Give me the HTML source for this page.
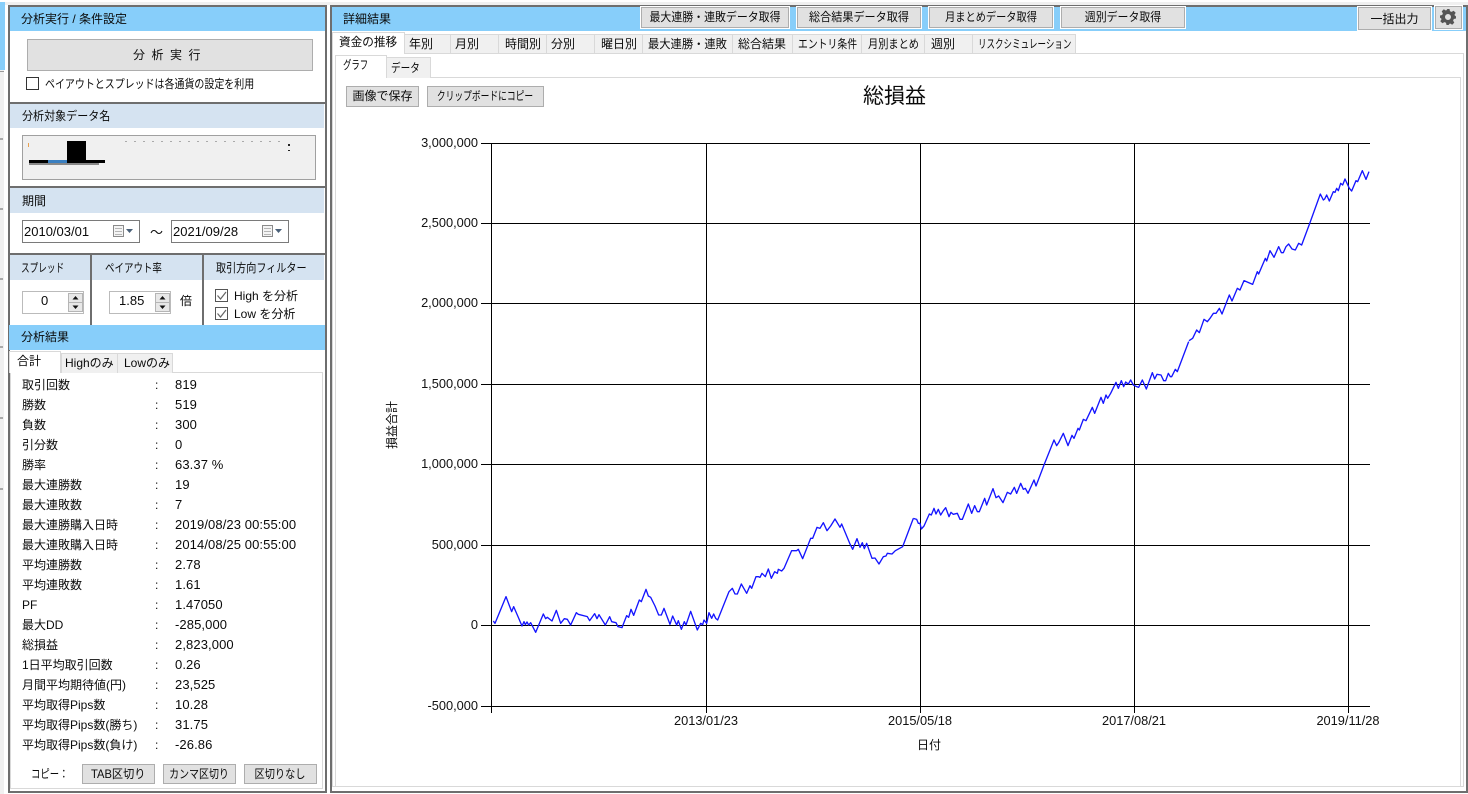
<!DOCTYPE html>
<html lang="ja"><head><meta charset="utf-8"><title>分析</title>
<style>
html,body{margin:0;padding:0;background:#fff}
body{width:1468px;height:794px;position:relative;overflow:hidden;font:12px/16px "Liberation Sans","Noto Sans CJK JP",sans-serif;color:#0a0a0a}
div,span.a{position:absolute;box-sizing:border-box;white-space:nowrap}
.blue{background:#87cefa}.sec{background:#d5e3f1}
.line{background:#6e6e6e}
.btn{background:#e1e1e1;border:1px solid #adadad;text-align:center;line-height:19px}
.s{display:inline-block;margin:0 -30px;transform-origin:50% 50%}
.l{display:inline-block;transform-origin:0 50%}
.ring{outline:1px solid #fff}
.t{line-height:16px;transform-origin:0 50%}
.tab{background:#f0f0f0;border:1px solid #d9d9d9;border-bottom:0;top:34px;height:19px;line-height:19px;padding-left:4px}
.tb{background:#f0f0f0;border:1px solid #d9d9d9;border-bottom:0}
.k{left:22px}.c{left:155px}.v{left:175px;font-size:13px;letter-spacing:.1px}
.cb{width:13px;height:13px;border:1px solid #555;background:#fff}
.spin{border:1px solid #bbb;background:#fff;height:23px;width:62px}
.date{border:1px solid #7a7a7a;background:#fff;height:23px;width:118px;top:220px;font-size:13px;line-height:21px;padding-left:1px}
.ax{font-size:12.8px;line-height:16px;color:#111}
svg{position:absolute;left:0;top:0}
</style></head><body>

<!-- window edge at far left -->
<div style="left:0;top:2px;width:1468px;height:3px;background:#f0f0f0"></div>
<div style="left:0;top:2px;width:5px;height:68px;background:#87cefa"></div>
<div style="left:0;top:70px;width:4px;height:724px;background:#f0f0f0"></div>
<div style="left:0;top:71px;width:4px;height:1px;background:#999"></div>
<div style="left:0;top:138px;width:3px;height:2px;background:#aaa"></div>
<div style="left:0;top:208px;width:3px;height:2px;background:#aaa"></div>
<div style="left:0;top:278px;width:3px;height:2px;background:#aaa"></div>
<div style="left:0;top:346px;width:3px;height:2px;background:#aaa"></div>
<div style="left:0;top:417px;width:3px;height:2px;background:#aaa"></div>
<div style="left:0;top:488px;width:3px;height:2px;background:#aaa"></div>

<!-- LEFT PANEL -->
<div style="left:8px;top:5px;width:319px;height:788px;border:2px solid #6e6e6e;background:#fff"></div>
<div class="blue" style="left:10px;top:7px;width:315px;height:24px"></div>
<div class="t" style="left:21px;top:11px">分析実行 / 条件設定</div>
<div class="btn" style="left:27px;top:39px;width:286px;height:32px;line-height:30px;letter-spacing:6.5px">分析実行</div>
<div class="cb" style="left:26px;top:77px;border-color:#333"></div>
<div class="t" style="left:45px;top:76px;transform:scaleX(.83)">ペイアウトとスプレッドは各通貨の設定を利用</div>

<div class="line" style="left:9px;top:102px;width:316px;height:2px"></div>
<div class="sec" style="left:10px;top:104px;width:314px;height:24px"></div>
<div class="t" style="left:22px;top:108px;transform:scaleX(.92)">分析対象データ名</div>
<div style="left:22px;top:135px;width:294px;height:45px;border:1px solid #a0a0a0;background:#f0f0f0"></div>
<div style="left:67px;top:141px;width:19px;height:20px;background:#000"></div>
<div style="left:29px;top:160px;width:76px;height:3px;background:#000"></div>
<div style="left:48px;top:160px;width:19px;height:3px;background:#3a7fc0"></div>
<div style="left:29px;top:163px;width:70px;height:2px;background:#888"></div>
<div style="left:288px;top:144px;width:2px;height:2px;background:#222"></div>
<div style="left:288px;top:150px;width:2px;height:1px;background:#222"></div>
<div style="left:125px;top:141px;width:160px;height:1px;background:repeating-linear-gradient(90deg,#aaa 0 2px,transparent 2px 9px)"></div>
<div style="left:28px;top:143px;width:1px;height:4px;background:#e8a050"></div>

<div class="line" style="left:9px;top:186px;width:316px;height:2px"></div>
<div class="sec" style="left:10px;top:188px;width:314px;height:25px"></div>
<div class="t" style="left:22px;top:193px">期間</div>
<div class="date" style="left:22px">2010/03/01</div>
<div class="date" style="left:171px">2021/09/28</div>
<div style="left:150px;top:224px;font-size:13px;line-height:18px">～</div>

<div class="line" style="left:9px;top:253px;width:316px;height:2px"></div>
<div class="sec" style="left:10px;top:255px;width:314px;height:25px"></div>
<div class="line" style="left:90px;top:255px;width:2px;height:70px"></div>
<div class="line" style="left:202px;top:255px;width:2px;height:70px"></div>
<div class="t" style="left:21px;top:260px;transform:scaleX(.72)">スプレッド</div>
<div class="t" style="left:105px;top:260px;transform:scaleX(.79)">ペイアウト率</div>
<div class="t" style="left:216px;top:260px;transform:scaleX(.84)">取引方向フィルター</div>

<div class="spin" style="left:22px;top:291px"></div>
<div class="t" style="left:41px;top:293px;font-size:13px">0</div>
<div class="spin" style="left:109px;top:291px"></div>
<div class="t" style="left:119px;top:293px;font-size:13px">1.85</div>
<div class="t" style="left:180px;top:293px">倍</div>
<div class="cb" style="left:215px;top:289px"></div>
<div class="cb" style="left:215px;top:307px"></div>
<div class="t" style="left:234px;top:288px">High を分析</div>
<div class="t" style="left:234px;top:306px">Low を分析</div>

<div class="blue" style="left:9px;top:325px;width:316px;height:25px"></div>
<div class="t" style="left:21px;top:329px">分析結果</div>
<div style="left:10px;top:372px;width:313px;height:417px;border:1px solid #d9d9d9;background:#fff"></div>
<div class="tb" style="left:61px;top:353px;width:57px;height:20px"></div>
<div class="tb" style="left:117px;top:353px;width:56px;height:20px"></div>
<div style="left:9px;top:351px;width:52px;height:22px;background:#fff;border:1px solid #d9d9d9;border-bottom:0"></div>
<div class="t" style="left:17px;top:353px">合計</div>
<div class="t" style="left:65px;top:355px">Highのみ</div>
<div class="t" style="left:124px;top:355px">Lowのみ</div>

<div class="t k" style="top:377px">取引回数</div><div class="t c" style="top:377px">:</div><div class="t v" style="top:377px">819</div>
<div class="t k" style="top:397px">勝数</div><div class="t c" style="top:397px">:</div><div class="t v" style="top:397px">519</div>
<div class="t k" style="top:417px">負数</div><div class="t c" style="top:417px">:</div><div class="t v" style="top:417px">300</div>
<div class="t k" style="top:437px">引分数</div><div class="t c" style="top:437px">:</div><div class="t v" style="top:437px">0</div>
<div class="t k" style="top:457px">勝率</div><div class="t c" style="top:457px">:</div><div class="t v" style="top:457px">63.37 %</div>
<div class="t k" style="top:477px">最大連勝数</div><div class="t c" style="top:477px">:</div><div class="t v" style="top:477px">19</div>
<div class="t k" style="top:497px">最大連敗数</div><div class="t c" style="top:497px">:</div><div class="t v" style="top:497px">7</div>
<div class="t k" style="top:517px">最大連勝購入日時</div><div class="t c" style="top:517px">:</div><div class="t v" style="top:517px">2019/08/23 00:55:00</div>
<div class="t k" style="top:537px">最大連敗購入日時</div><div class="t c" style="top:537px">:</div><div class="t v" style="top:537px">2014/08/25 00:55:00</div>
<div class="t k" style="top:557px">平均連勝数</div><div class="t c" style="top:557px">:</div><div class="t v" style="top:557px">2.78</div>
<div class="t k" style="top:577px">平均連敗数</div><div class="t c" style="top:577px">:</div><div class="t v" style="top:577px">1.61</div>
<div class="t k" style="top:597px">PF</div><div class="t c" style="top:597px">:</div><div class="t v" style="top:597px">1.47050</div>
<div class="t k" style="top:617px">最大DD</div><div class="t c" style="top:617px">:</div><div class="t v" style="top:617px">-285,000</div>
<div class="t k" style="top:637px">総損益</div><div class="t c" style="top:637px">:</div><div class="t v" style="top:637px">2,823,000</div>
<div class="t k" style="top:657px">1日平均取引回数</div><div class="t c" style="top:657px">:</div><div class="t v" style="top:657px">0.26</div>
<div class="t k" style="top:677px">月間平均期待値(円)</div><div class="t c" style="top:677px">:</div><div class="t v" style="top:677px">23,525</div>
<div class="t k" style="top:697px">平均取得Pips数</div><div class="t c" style="top:697px">:</div><div class="t v" style="top:697px">10.28</div>
<div class="t k" style="top:717px">平均取得Pips数(勝ち)</div><div class="t c" style="top:717px">:</div><div class="t v" style="top:717px">31.75</div>
<div class="t k" style="top:737px">平均取得Pips数(負け)</div><div class="t c" style="top:737px">:</div><div class="t v" style="top:737px">-26.86</div>

<div class="t" style="left:31px;top:766px;transform:scaleX(.78)">コピー：</div>
<div class="btn" style="left:82px;top:764px;width:73px;height:20px"><span class="s" style="transform:scaleX(.93)">TAB区切り</span></div>
<div class="btn" style="left:163px;top:764px;width:73px;height:20px"><span class="s" style="transform:scaleX(.83)">カンマ区切り</span></div>
<div class="btn" style="left:244px;top:764px;width:73px;height:20px"><span class="s" style="transform:scaleX(.85)">区切りなし</span></div>

<!-- RIGHT PANEL -->
<div style="left:330px;top:5px;width:1138px;height:788px;border:2px solid #6e6e6e;background:#fff"></div>
<div class="blue" style="left:332px;top:7px;width:1134px;height:24px"></div>
<div class="t" style="left:343px;top:11px">詳細結果</div>
<div class="btn ring" style="left:641px;top:7px;width:148px;height:21px"><span class="s" style="transform:scaleX(.91)">最大連勝・連敗データ取得</span></div>
<div class="btn ring" style="left:797px;top:7px;width:124px;height:21px"><span class="s" style="transform:scaleX(.925)">総合結果データ取得</span></div>
<div class="btn ring" style="left:929px;top:7px;width:124px;height:21px"><span class="s" style="transform:scaleX(.85)">月まとめデータ取得</span></div>
<div class="btn ring" style="left:1061px;top:7px;width:124px;height:21px"><span class="s" style="transform:scaleX(.91)">週別データ取得</span></div>
<div class="btn ring" style="left:1358px;top:7px;width:73px;height:23px;line-height:22px">一括出力</div>
<div class="btn ring" style="left:1435px;top:6px;width:27px;height:23px"></div>
<svg width="1468" height="794" viewBox="0 0 1468 794" style="z-index:2">
<g transform="translate(1448 17)" fill="#555"><path fill-rule="evenodd" d="M-1.5-8h3l.5 2.2 1.6.7 2-1.2 2.1 2.1-1.2 2 .7 1.6L8-1.5v3l-2.2.5-.7 1.6 1.2 2-2.1 2.1-2-1.2-1.6.7L1.5 8h-3l-.5-2.2-1.6-.7-2 1.2-2.1-2.1 1.2-2-.7-1.6L-8 1.5v-3l2.2-.5.7-1.6-1.2-2 2.1-2.1 2 1.2 1.6-.7zM0-3a3 3 0 1 0 0 6 3 3 0 0 0 0-6z"/></g>
</svg>

<div style="left:332px;top:53px;width:1132px;height:734px;border:1px solid #d9d9d9;background:#fff"></div>
<div style="left:335px;top:77px;width:1126px;height:710px;border:1px solid #d9d9d9;background:#fff"></div>
<div class="tab" style="left:404px;width:47px">年別</div>
<div class="tab" style="left:450px;width:49px">月別</div>
<div class="tab" style="left:498px;width:49px;padding-left:6px">時間別</div>
<div class="tab" style="left:546px;width:49px">分別</div>
<div class="tab" style="left:594px;width:49px;padding-left:6px">曜日別</div>
<div class="tab" style="left:642px;width:91px;padding-left:5px"><span class="l" style="transform:scaleX(.94)">最大連勝・連敗</span></div>
<div class="tab" style="left:732px;width:61px;padding-left:5px"><span class="l">総合結果</span></div>
<div class="tab" style="left:792px;width:70px;padding-left:5px"><span class="l" style="transform:scaleX(.82)">エントリ条件</span></div>
<div class="tab" style="left:861px;width:64px;padding-left:6px"><span class="l" style="transform:scaleX(.85)">月別まとめ</span></div>
<div class="tab" style="left:924px;width:49px;padding-left:6px">週別</div>
<div class="tab" style="left:972px;width:104px;padding-left:5px"><span class="l" style="transform:scaleX(.71)">リスクシミュレーション</span></div>
<div style="left:332px;top:32px;width:73px;height:22px;background:#fff;border:1px solid #d9d9d9;border-bottom:0;line-height:19px;padding-left:6px"><span class="l" style="transform:scaleX(.97)">資金の推移</span></div>
<div class="tb" style="left:386px;top:57px;width:45px;height:21px;line-height:20px;padding-left:4px"><span class="l" style="transform:scaleX(.8)">データ</span></div>
<div style="left:335px;top:55px;width:52px;height:23px;background:#fff;border:1px solid #d9d9d9;border-bottom:0;line-height:19px;padding-left:7px"><span class="l" style="transform:scaleX(.7)">グラフ</span></div>

<div class="btn" style="left:346px;top:86px;width:73px;height:21px">画像で保存</div>
<div class="btn" style="left:427px;top:86px;width:117px;height:21px"><span class="s" style="transform:scaleX(.73)">クリップボードにコピー</span></div>
<div style="left:863px;top:84px;font-size:21px;line-height:26px">総損益</div>

<!-- chart -->
<svg width="1468" height="794" viewBox="0 0 1468 794" style="z-index:1">
<g stroke="#000" stroke-width="1" shape-rendering="crispEdges" fill="none">
<path d="M481 143.5H1370M481 223.5H1370M481 303.5H1370M481 384.5H1370M481 464.5H1370M481 545.5H1370M481 625.5H1370M481 706.5H1370"/>
<path d="M491.5 143V713M706.5 143V713M920.5 143V713M1134.5 143V713M1348.5 143V713"/>
</g>
<g fill="none" stroke="#1414ff" stroke-linejoin="round">
<polyline transform="translate(480 520) scale(.33333)" stroke-width="4" points="40,303 45,310 78,230 95,275 101,260 115,292 126,318 132,305 136,314 141,306 146,315 152,308 167,337 190,282 197,296 202,292 216,303 229,271 242,310 253,296 262,298 272,315 289,278 295,283 322,290 329,302 344,281 351,296 357,284 376,315 389,290 395,305 408,308 414,320 426,323 440,287 446,292 453,268 461,286 478,240 484,245 498,208 505,228 512,232 525,258 536,285 544,285 552,265 570,313 578,288 590,315 595,302 604,328 613,305 618,315 632,274 652,330 662,310 668,314 672,300 680,310 687,278 695,295 701,282 707,295 713,300 747,215 757,205 765,222 772,222 784,192 792,206 800,220 810,197 815,205 828,170 835,170 840,172 846,160 856,170 865,147 874,175 884,155 892,160 895,148 905,153 912,145 935,92 950,92 955,88 968,116 992,55 998,55 1011,22 1020,25 1030,8 1041,32 1052,18 1065,-3 1080,22 1085,12 1110,72 1118,88 1131,56 1140,82 1147,68 1153,86 1160,70 1176,115 1185,114 1197,132 1210,110 1218,108 1222,100 1236,102 1246,92 1268,80 1300,-5"/>
<polyline transform="translate(900 330) scale(.33333)" stroke-width="4" points="40,565 50,568 55,580 60,580 64,597 72,588 88,552 94,555 102,535 108,552 115,538 122,555 130,542 137,533 147,560 153,547 160,553 172,550 180,568 187,568 205,522 215,550 224,527 232,545 238,545 254,505 260,525 279,476 288,503 296,498 309,518 322,487 332,492 343,472 350,490 362,460 370,478 376,475 384,490 402,450 408,468 432,405 462,330 470,347 476,338 490,310 504,347 516,316 522,325 534,295 538,300 550,268 558,272 577,232 584,250 603,202 610,220 618,195 623,205 632,190 648,157 655,175 664,152 671,170 677,156 685,162 692,150 700,165 710,170 716,172 727,150 739,177 757,128 764,147 771,133 783,135 791,152 797,152 805,130 811,140 815,140 826,118 832,125 866,35"/>
<polyline transform="translate(1120 150) scale(.33333)" stroke-width="4" points="207,572 218,565 230,540 238,548 252,508 262,515 270,505 280,490 288,490 298,475 306,492 328,435 336,453 352,415 360,420 372,392 398,403 412,365 416,372 436,325 440,333 450,302 462,322 476,290 484,308 490,308 498,290 506,282 516,297 526,300 536,280 545,285 570,218 601,132 610,150 614,147 620,135 628,153 640,125 645,127 650,115 655,122 662,100 668,105 675,87 688,115 695,123 708,92 713,95 727,62 738,88 747,65"/>
</g>
</svg>
<div class="ax" style="left:378px;top:135px;width:100px;text-align:right;z-index:3">3,000,000</div>
<div class="ax" style="left:378px;top:215px;width:100px;text-align:right;z-index:3">2,500,000</div>
<div class="ax" style="left:378px;top:295px;width:100px;text-align:right;z-index:3">2,000,000</div>
<div class="ax" style="left:378px;top:376px;width:100px;text-align:right;z-index:3">1,500,000</div>
<div class="ax" style="left:378px;top:456px;width:100px;text-align:right;z-index:3">1,000,000</div>
<div class="ax" style="left:378px;top:537px;width:100px;text-align:right;z-index:3">500,000</div>
<div class="ax" style="left:378px;top:617px;width:100px;text-align:right;z-index:3">0</div>
<div class="ax" style="left:378px;top:698px;width:100px;text-align:right;z-index:3">-500,000</div>
<div class="ax" style="left:656px;top:713px;width:100px;text-align:center;z-index:3">2013/01/23</div>
<div class="ax" style="left:870px;top:713px;width:100px;text-align:center;z-index:3">2015/05/18</div>
<div class="ax" style="left:1084px;top:713px;width:100px;text-align:center;z-index:3">2017/08/21</div>
<div class="ax" style="left:1298px;top:713px;width:100px;text-align:center;z-index:3">2019/11/28</div>
<div style="left:917px;top:737px;z-index:3">日付</div>
<div style="left:368px;top:417px;width:48px;text-align:center;transform:rotate(-90deg);z-index:3">損益合計</div>

<!-- small control icons -->
<svg width="1468" height="794" viewBox="0 0 1468 794" style="z-index:4">
<g fill="#f4f4f4" stroke="#8a8a8a"><rect x="113.500" y="225.500" width="10" height="11"/><rect x="262.500" y="225.500" width="10" height="11"/></g>
<path d="M115 228.500h7M115 231.500h7M115 234.500h7M264 228.500h7M264 231.500h7M264 234.500h7" stroke="#b5b5b5"/>
<path d="M126 229h7l-3.500 4zM275 229h7l-3.500 4z" fill="#4a6078"/>
<g fill="#e8e8e8" stroke="#b5b5b5"><rect x="68.500" y="293.500" width="14" height="9"/><rect x="68.500" y="302.500" width="14" height="9"/><rect x="155.500" y="293.500" width="14" height="9"/><rect x="155.500" y="302.500" width="14" height="9"/></g>
<path d="M75.500 296l3 3.500h-6zM75.500 309l3-3.500h-6zM162.500 296l3 3.500h-6zM162.500 309l3-3.500h-6z" fill="#111"/>
<path d="M217.500 295.500l3 3.500 5.500-7M217.500 313.500l3 3.500 5.500-7" fill="none" stroke="#666" stroke-width="1.200"/>
</svg>
</body></html>
